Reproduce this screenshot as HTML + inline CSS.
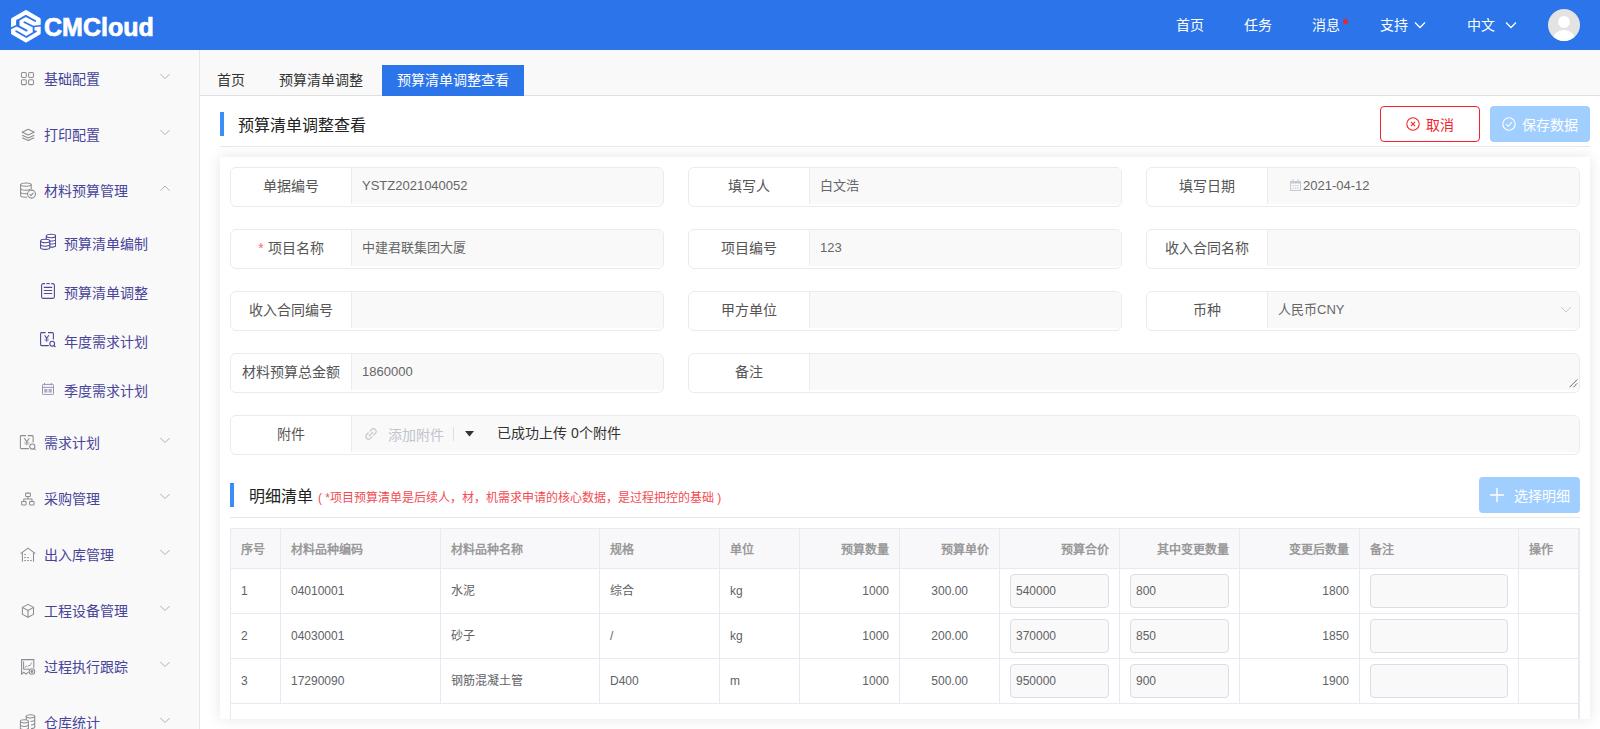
<!DOCTYPE html>
<html lang="zh-CN">
<head>
<meta charset="utf-8">
<title>CMCloud</title>
<style>
*{box-sizing:border-box;margin:0;padding:0}
html,body{width:1600px;height:729px;overflow:hidden;background:#f9f9f9;font-family:"Liberation Sans",sans-serif;color:#333}
.abs{position:absolute}
#hdr{position:absolute;left:0;top:0;width:1600px;height:50px;background:#2b74ea}
#side{position:absolute;left:0;top:50px;width:200px;height:679px;background:#f9f9f9;border-right:1px solid #e6e6e6}
.mi{position:absolute;left:0;width:199px;height:20px;font-size:14px;line-height:20px;color:#47449a}
.mi .t{position:absolute;left:44px;top:0;white-space:nowrap}
.mi .ic{position:absolute;left:20px;top:3px;width:14px;height:14px}
.mi .ch{position:absolute;left:160px;top:4px;width:10px;height:7px}
.sub .t{left:64px}
.sub .ic{left:40px}
#tabs{position:absolute;left:200px;top:50px;width:1400px;height:46px;background:#f9f9f9;border-bottom:1px solid #e0e0e0}
.tab{position:absolute;top:15px;height:30px;line-height:30px;font-size:14px;color:#333;white-space:nowrap}
#main{position:absolute;left:200px;top:96px;width:1400px;height:633px;background:#fff}
.logo-t{left:44px;top:11px;font-size:25px;line-height:32px;font-weight:bold;color:#fff;letter-spacing:0px;-webkit-text-stroke:0.7px #fff}
.nav{top:15px;font-size:14px;line-height:20px;color:#fff;white-space:nowrap}
.ttl{font-size:16px;line-height:24px;color:#222;white-space:nowrap}
.btn-c{width:100px;height:36px;border:1px solid #f5222d;border-radius:4px;background:#fff;color:#f5222d;font-size:14px;line-height:20px}
.btn-s{width:100px;height:36px;border-radius:4px;background:#a0cfff;color:#fff;font-size:14px;line-height:20px}
.btn-c span,.btn-s span{white-space:nowrap}
#card{position:absolute;left:20px;top:61px;width:1370px;height:562px;background:#fff;box-shadow:0 0 14px rgba(0,0,0,0.1)}
.fld{position:absolute;height:40px;border:1px solid #ebebeb;border-radius:6px;background:#fff;overflow:hidden}
.fld .lab{position:absolute;left:0;top:0;width:121px;height:36px;border-right:1px solid #ebebeb;text-align:center;font-size:14px;line-height:36px;color:#555;white-space:nowrap}
.fld .val{position:absolute;left:121px;top:0;right:0;height:36px;background:#f9f9f9;font-size:13px;line-height:36px;color:#666;padding-left:10px;white-space:nowrap}
#tbl{position:absolute;left:10px;top:371px;width:1350px;height:191px;overflow:hidden;border-top:0}
.hl{left:0;width:1350px;height:1px;background:#e8eaf3}
.vl{top:0;width:1px;height:175px;background:#e8eaf3}
.th{top:2px;height:40px;line-height:40px;font-size:12px;font-weight:bold;color:#999;white-space:nowrap;padding:0 10px 0 11px}
.td{height:45px;line-height:47px;font-size:12px;color:#606266;white-space:nowrap;padding:0 10px 0 11px}
.r{text-align:right}
.inp{height:34px;border:1px solid #dcdde6;border-radius:4px;background:#f9f9f9;font-size:12px;line-height:32px;color:#606266;padding-left:5px}
</style>
</head>
<body>
<div id="hdr">
<svg class="abs" style="left:8px;top:6px" width="40" height="40" viewBox="0 0 40 40"><g transform="translate(-8,-6)">
<path d="M26,11.6 L39.2,19.3 L39.2,33.3 L26,41 L12.6,33.3 L12.6,19.3 Z" fill="#fff" stroke="#fff" stroke-width="3" stroke-linejoin="round"/>
<g fill="none" stroke="#2b74ea" stroke-linecap="round" stroke-linejoin="round">
<path d="M35.2,21 L25.8,15.9 L17.8,20.5 L17.8,25.9 L26.6,30.6" stroke-width="1.8"/>
<path d="M17.8,21 L17.8,25.6" stroke-width="3.4"/>
<path d="M10,28.8 L15.8,26" stroke-width="1.6"/>
<path d="M24.4,22.2 L33.6,26.8 L33.6,31.3 L36,31.3 L26.3,37 L16.2,31.3" stroke-width="1.8"/>
<path d="M33.6,26.6 L42,25.6" stroke-width="1.5"/>
</g></g></svg>
<div class="abs logo-t">CMCloud</div>
<div class="abs nav" style="left:1176px">首页</div>
<div class="abs nav" style="left:1244px">任务</div>
<div class="abs nav" style="left:1312px">消息</div>
<div class="abs" style="left:1343px;top:19px;width:5px;height:5px;border-radius:50%;background:#f5222d"></div>
<div class="abs nav" style="left:1380px">支持</div>
<svg class="abs" style="left:1414px;top:21px" width="12" height="8" viewBox="0 0 12 8"><path d="M1,1.5 L6,6.5 L11,1.5" fill="none" stroke="#fff" stroke-width="1.3"/></svg>
<div class="abs nav" style="left:1467px">中文</div>
<svg class="abs" style="left:1505px;top:21px" width="12" height="8" viewBox="0 0 12 8"><path d="M1,1.5 L6,6.5 L11,1.5" fill="none" stroke="#fff" stroke-width="1.3"/></svg>
<svg class="abs" style="left:1548px;top:9px" width="32" height="32" viewBox="0 0 32 32"><defs><clipPath id="avc"><circle cx="16" cy="16" r="16"/></clipPath></defs><circle cx="16" cy="16" r="16" fill="#e3e3e3"/><g clip-path="url(#avc)" fill="#fff"><circle cx="16" cy="13" r="6"/><ellipse cx="16" cy="30" rx="11" ry="9"/></g></svg>
</div>
<div id="side">
<div class="mi" style="top:19px"><svg class="ic" style="left:0;top:0;width:40px;height:20px;overflow:visible" viewBox="0 0 40 20"><g fill="none" stroke="#8c8c92" stroke-width="1.05" stroke-linejoin="round"><rect x="21.4" y="3.5" width="4.9" height="4.9" rx="1.2"/><rect x="28.6" y="3.5" width="4.9" height="4.9" rx="1.2"/><rect x="21.4" y="10.7" width="4.9" height="4.9" rx="1.2"/><rect x="28.6" y="10.7" width="4.9" height="4.9" rx="1.2"/></g></svg><span class="t">基础配置</span><svg class="ch" viewBox="0 0 11 7"><path d="M0.5,0.8 L5.5,5.8 L10.5,0.8" fill="none" stroke="#a8a8b8" stroke-width="1"/></svg></div>
<div class="mi" style="top:75px"><svg class="ic" style="left:0;top:0;width:40px;height:20px;overflow:visible" viewBox="0 0 40 20"><g fill="none" stroke="#8c8c92" stroke-width="1.05" stroke-linejoin="round"><path d="M22.2,7.3 L28.2,4.3 L34.2,7.3 L28.2,9.9 Z"/><path d="M22.2,10.2 L28.2,13 L34.2,10.2"/><path d="M22.2,12.8 L28.2,15.5 L34.2,12.8"/></g></svg><span class="t">打印配置</span><svg class="ch" viewBox="0 0 11 7"><path d="M0.5,0.8 L5.5,5.8 L10.5,0.8" fill="none" stroke="#a8a8b8" stroke-width="1"/></svg></div>
<div class="mi" style="top:131px"><svg class="ic" style="left:0;top:0;width:40px;height:20px;overflow:visible" viewBox="0 0 40 20"><g fill="none" stroke="#8c8c92" stroke-width="1.05" stroke-linejoin="round"><ellipse cx="25.9" cy="3.6" rx="5.3" ry="1.7"/><path d="M20.6,3.6 V14.6 C20.6,15.6 23,16.3 25.9,16.3 C26.3,16.3 26.7,16.3 27,16.3"/><path d="M31.2,3.6 V8.5"/><path d="M20.6,7.5 C20.6,8.5 23,9.2 25.9,9.2 C27.5,9.2 29,9 30,8.6"/><path d="M20.6,11 C20.6,12 23,12.7 25.9,12.7 C26.5,12.7 27,12.7 27.3,12.6"/><circle cx="31.5" cy="13.1" r="4"/><path d="M29.6,13.2 L31,14.6 L33.5,11.8"/></g></svg><span class="t">材料预算管理</span><svg class="ch" viewBox="0 0 11 7"><path d="M0.5,5.8 L5.5,0.8 L10.5,5.8" fill="none" stroke="#a8a8b8" stroke-width="1"/></svg></div>
<div class="mi sub" style="top:184px"><svg class="ic" style="left:40px;top:-1px;width:16px;height:17px" viewBox="0 0 16 17"><g fill="#fff" stroke="#4d4a96" stroke-width="1.1"><path d="M6.3,3 V12.5 C6.3,13.4 8.4,14.1 11,14.1 C13.6,14.1 15.6,13.4 15.6,12.5 V3"/><ellipse cx="11" cy="3" rx="4.6" ry="1.7"/><path d="M6.3,6.4 C6.3,7.3 8.4,8 11,8 C13.6,8 15.6,7.3 15.6,6.4 M9,10.6 C9.6,10.9 10.3,11 11,11 C13.6,11 15.6,10.3 15.6,9.4" fill="none"/><path d="M0.6,8 V14.8 C0.6,15.7 2.7,16.4 5.2,16.4 C7.7,16.4 9.8,15.7 9.8,14.8 V8"/><ellipse cx="5.2" cy="8" rx="4.6" ry="1.7"/><path d="M0.6,11.6 C0.6,12.5 2.7,13.2 5.2,13.2 C7.7,13.2 9.8,12.5 9.8,11.6" fill="none"/></g></svg><span class="t">预算清单编制</span></div>
<div class="mi sub" style="top:233px"><svg class="ic" style="left:41px;top:0px;width:14px;height:16px" viewBox="0 0 14 16"><g fill="none" stroke="#4d4a96" stroke-width="1.1"><path d="M4,0.6 H2.2 C1.3,0.6 0.6,1.3 0.6,2.2 V13.8 C0.6,14.7 1.3,15.4 2.2,15.4 H11.8 C12.7,15.4 13.4,14.7 13.4,13.8 V2.2 C13.4,1.3 12.7,0.6 11.8,0.6 H10.2"/><path d="M5.3,0.6 H8.8"/><path d="M2.8,4.4 H11.2 M2.8,7.5 H11.2 M2.8,10.5 H11.2"/></g></svg><span class="t">预算清单调整</span></div>
<div class="mi sub" style="top:282px"><svg class="ic" style="left:40px;top:0px;width:16px;height:16px" viewBox="0 0 16 16"><g fill="none" stroke="#4d4a96" stroke-width="1.1"><path d="M5.6,0.6 H1.6 C1,0.6 0.6,1 0.6,1.6 V12.6 C0.6,13.2 1,13.6 1.6,13.6 H8.8"/><path d="M8,0.6 H12.4 C13,0.6 13.4,1 13.4,1.6 V7.5"/><path d="M4.6,3.2 L6.7,6.2 L8.8,3.2 M6.7,6.2 V9.8"/><circle cx="12.2" cy="11.7" r="2.4"/><path d="M13.9,13.4 L15.4,15"/></g><rect x="4.3" y="6.5" width="4.8" height="2.6" fill="#4d4a96" opacity="0.3"/></svg><span class="t">年度需求计划</span></div>
<div class="mi sub" style="top:331px"><svg class="ic" style="left:42px;top:1px;width:12px;height:13px" viewBox="0 0 12 13"><g fill="none" stroke="#9a92b4" stroke-width="1"><rect x="0.5" y="2.4" width="11" height="10.2" rx="0.8"/><path d="M0.5,5.4 H11.5"/><path d="M2.5,1 V3.4 M9.3,1 V3.4"/></g><g fill="#b4a6c4"><rect x="2.2" y="7" width="3.2" height="3.6"/><rect x="6.6" y="7" width="3.2" height="3.6"/></g></svg><span class="t">季度需求计划</span></div>
<div class="mi" style="top:383px"><svg class="ic" style="left:0;top:0;width:40px;height:20px;overflow:visible" viewBox="0 0 40 20"><g fill="none" stroke="#8c8c92" stroke-width="1.05" stroke-linejoin="round"><path d="M25.9,2.6 H21.2 C20.7,2.6 20.4,2.9 20.4,3.4 V14.8 C20.4,15.3 20.7,15.6 21.2,15.6 H28.8"/><path d="M27.8,2.6 H32.3 C32.8,2.6 33.1,2.9 33.1,3.4 V9.6"/><path d="M24.3,5.2 L26.8,8.6 L29.3,5.2 M26.8,8.6 V12.2"/><circle cx="32.3" cy="13.5" r="2.6"/><path d="M34.1,15.4 L35.6,17"/><rect x="24.2" y="8.6" width="5.2" height="3" fill="#8c8c92" stroke="none" opacity="0.35"/></g></svg><span class="t">需求计划</span><svg class="ch" viewBox="0 0 11 7"><path d="M0.5,0.8 L5.5,5.8 L10.5,0.8" fill="none" stroke="#a8a8b8" stroke-width="1"/></svg></div>
<div class="mi" style="top:439px"><svg class="ic" style="left:0;top:0;width:40px;height:20px;overflow:visible" viewBox="0 0 40 20"><g fill="none" stroke="#8c8c92" stroke-width="1.05" stroke-linejoin="round"><rect x="25.6" y="4.1" width="4.8" height="3.3" rx="0.6"/><rect x="21.6" y="12.5" width="4.5" height="3.4" rx="0.6"/><rect x="29.6" y="12.5" width="4.5" height="3.4" rx="0.6"/><path d="M28,7.4 V9.6 M23.8,12.5 V10 H32 V12.5"/></g></svg><span class="t">采购管理</span><svg class="ch" viewBox="0 0 11 7"><path d="M0.5,0.8 L5.5,5.8 L10.5,0.8" fill="none" stroke="#a8a8b8" stroke-width="1"/></svg></div>
<div class="mi" style="top:495px"><svg class="ic" style="left:0;top:0;width:40px;height:20px;overflow:visible" viewBox="0 0 40 20"><g fill="none" stroke="#8c8c92" stroke-width="1.05" stroke-linejoin="round"><path d="M20.6,8.6 L28,3.2 L35.4,8.6"/><path d="M22.4,7.3 V16.8 M33.5,7.3 V16.8"/></g><g fill="#8c8c92"><rect x="24.3" y="9" width="1.6" height="1.1"/><rect x="24.3" y="12" width="1.6" height="1.1"/><rect x="27.2" y="12" width="1.6" height="1.1"/><rect x="24.3" y="15" width="1.6" height="1.1"/><rect x="27.2" y="15" width="1.6" height="1.1"/><rect x="30.1" y="15" width="1.6" height="1.1"/></g></svg><span class="t">出入库管理</span><svg class="ch" viewBox="0 0 11 7"><path d="M0.5,0.8 L5.5,5.8 L10.5,0.8" fill="none" stroke="#a8a8b8" stroke-width="1"/></svg></div>
<div class="mi" style="top:551px"><svg class="ic" style="left:0;top:0;width:40px;height:20px;overflow:visible" viewBox="0 0 40 20"><g fill="none" stroke="#8c8c92" stroke-width="1.05" stroke-linejoin="round"><path d="M28,3.4 L33.5,6.4 V13.4 L28,16.3 L22.4,13.4 V6.4 Z"/><path d="M22.4,6.4 L28,9.5 L33.5,6.4 M28,9.5 V16.3"/></g></svg><span class="t">工程设备管理</span><svg class="ch" viewBox="0 0 11 7"><path d="M0.5,0.8 L5.5,5.8 L10.5,0.8" fill="none" stroke="#a8a8b8" stroke-width="1"/></svg></div>
<div class="mi" style="top:607px"><svg class="ic" style="left:0;top:0;width:40px;height:20px;overflow:visible" viewBox="0 0 40 20"><g fill="none" stroke="#8c8c92" stroke-width="1.05" stroke-linejoin="round"><path d="M21.6,17.4 V2.6 H33.8 V10.8" stroke-width="1.1"/><path d="M21.6,17.4 L23.8,15.2 L26,17.2 L28.4,15.2"/><path d="M23.6,4.4 V12.4 M23.6,12.2 H29.5" stroke-width="1"/><path d="M24.6,10.5 L26.3,9.2 L27.4,9.9 L29,8.3 L30,8.8 L31.6,5.6" stroke-width="0.8"/><circle cx="31.9" cy="14.5" r="2.8"/><circle cx="31.9" cy="14.5" r="0.9" fill="#8c8c92"/></g></svg><span class="t">过程执行跟踪</span><svg class="ch" viewBox="0 0 11 7"><path d="M0.5,0.8 L5.5,5.8 L10.5,0.8" fill="none" stroke="#a8a8b8" stroke-width="1"/></svg></div>
<div class="mi" style="top:663px"><svg class="ic" style="left:0;top:0;width:40px;height:20px;overflow:visible" viewBox="0 0 40 20"><g fill="none" stroke="#8c8c92" stroke-width="1.05" stroke-linejoin="round"><path d="M26.2,3.3 V8 M34.7,3.3 V14 C34.7,14.9 33,15.5 31,15.5"/><ellipse cx="30.45" cy="3.3" rx="4.25" ry="1.6"/><path d="M34.7,6.8 C34.7,7.7 32.8,8.4 30.45,8.4 M34.7,10.3 C34.7,11.2 33,11.8 31,11.9"/><path d="M20.4,8.3 V16 C20.4,16.9 22.3,17.6 24.4,17.6 C26.5,17.6 28.4,16.9 28.4,16 V8.3"/><ellipse cx="24.4" cy="8.3" rx="4" ry="1.6" fill="#f9f9f9"/><path d="M20.4,11.8 C20.4,12.7 22.3,13.4 24.4,13.4 C26.5,13.4 28.4,12.7 28.4,11.8 M20.4,15 C20.4,15.9 22.3,16.6 24.4,16.6 C26.5,16.6 28.4,15.9 28.4,15"/></g></svg><span class="t">仓库统计</span><svg class="ch" viewBox="0 0 11 7"><path d="M0.5,0.8 L5.5,5.8 L10.5,0.8" fill="none" stroke="#a8a8b8" stroke-width="1"/></svg></div>
</div>
<div id="tabs">
<div class="tab" style="left:17px">首页</div>
<div class="tab" style="left:79px">预算清单调整</div>
<div class="tab act" style="left:182px;width:142px;height:31px;text-align:center;background:#2b74ea;color:#fff">预算清单调整查看</div>
</div>
<div id="main">
<div class="abs" style="left:20px;top:16px;width:4px;height:24px;background:#3a8ef6"></div>
<div class="abs ttl" style="left:38px;top:18px">预算清单调整查看</div>
<div class="abs" style="left:20px;top:50px;width:1370px;height:1px;background:#e8e8e8"></div>
<div class="abs btn-c" style="left:1180px;top:10px"><svg class="abs" style="left:25px;top:10px" width="14" height="14" viewBox="0 0 14 14"><circle cx="7" cy="7" r="6.2" fill="none" stroke="#f5222d" stroke-width="1.1"/><path d="M4.9,4.9 L9.1,9.1 M9.1,4.9 L4.9,9.1" stroke="#f5222d" stroke-width="1.1"/></svg><span class="abs" style="left:45px;top:8px">取消</span></div>
<div class="abs btn-s" style="left:1290px;top:10px"><svg class="abs" style="left:12px;top:11px" width="14" height="14" viewBox="0 0 14 14"><circle cx="7" cy="7" r="6.2" fill="none" stroke="#fff" stroke-width="1.1"/><path d="M4,7.2 L6.2,9.3 L10,5.2" fill="none" stroke="#fff" stroke-width="1.1"/></svg><span class="abs" style="left:32px;top:9px">保存数据</span></div>
<div id="card">
<div class="fld" style="left:10px;top:10px;width:434px"><div class="lab">单据编号</div><div class="val" style="">YSTZ2021040052</div></div>
<div class="fld" style="left:468px;top:10px;width:434px"><div class="lab">填写人</div><div class="val" style="">白文浩</div></div>
<div class="fld" style="left:926px;top:10px;width:434px"><div class="lab">填写日期</div><div class="val" style="color:#666"><svg style="position:absolute;left:22px;top:11px" width="11" height="12" viewBox="0 0 11 12"><g fill="none" stroke="#c8cad2" stroke-width="1"><rect x="0.5" y="2.5" width="10" height="9"/><path d="M3,0 V2.5 M8,0 V2.5"/></g><rect x="0.5" y="2.5" width="10" height="2" fill="#c8cad2"/><g fill="#d4d6dc"><rect x="2.3" y="6" width="1.6" height="1.2"/><rect x="4.7" y="6" width="1.6" height="1.2"/><rect x="7.1" y="6" width="1.6" height="1.2"/><rect x="2.3" y="8.5" width="1.6" height="1.4"/><rect x="4.7" y="8.5" width="1.6" height="1.4"/><rect x="7.1" y="8.5" width="1.6" height="1.4"/></g></svg><span style="position:absolute;left:35px">2021-04-12</span></div></div>
<div class="fld" style="left:10px;top:72px;width:434px"><div class="lab"><span style="color:#f56c6c">* </span>项目名称</div><div class="val" style="">中建君联集团大厦</div></div>
<div class="fld" style="left:468px;top:72px;width:434px"><div class="lab">项目编号</div><div class="val" style="">123</div></div>
<div class="fld" style="left:926px;top:72px;width:434px"><div class="lab">收入合同名称</div><div class="val" style=""></div></div>
<div class="fld" style="left:10px;top:134px;width:434px"><div class="lab">收入合同编号</div><div class="val" style=""></div></div>
<div class="fld" style="left:468px;top:134px;width:434px"><div class="lab">甲方单位</div><div class="val" style=""></div></div>
<div class="fld" style="left:926px;top:134px;width:434px"><div class="lab">币种</div><div class="val" style="">人民币CNY<svg style="position:absolute;right:7px;top:13px" width="12" height="9" viewBox="0 0 12 9"><path d="M1,2 L6,7 L11,2" fill="none" stroke="#c0c4cc" stroke-width="0.9"/></svg></div></div>
<div class="fld" style="left:10px;top:196px;width:434px"><div class="lab">材料预算总金额</div><div class="val" style="">1860000</div></div>
<div class="fld" style="left:468px;top:196px;width:892px"><div class="lab">备注</div><div class="val" style=""><svg style="position:absolute;right:1px;bottom:2px" width="9" height="9" viewBox="0 0 9 9"><path d="M8,0.8 L0.8,8 M8,4.6 L4.6,8" stroke="#666" stroke-width="1" stroke-linecap="round" stroke-dasharray="1.2 0.6"/></svg></div></div>
<div class="abs" style="left:10px;top:326px;width:4px;height:24px;background:#3a8ef6"></div>
<div class="abs" style="left:29px;top:328px;font-size:16px;line-height:24px;color:#222;white-space:nowrap">明细清单<span style="font-size:12px;color:#f24c52;margin-left:5px;position:relative;top:0px">( *项目预算清单是后续人，材，机需求申请的核心数据，是过程把控的基础 )</span></div>
<div class="abs btn-s" style="left:1259px;top:320px;width:101px"><svg class="abs" style="left:11px;top:11px" width="14" height="14" viewBox="0 0 14 14"><path d="M7,0 V14 M0,7 H14" stroke="#fff" stroke-width="1.4"/></svg><span class="abs" style="left:35px;top:9px">选择明细</span></div>
<div class="abs" style="left:10px;top:360px;width:1350px;height:1px;background:#e8e8e8"></div>
<div id="tbl">
<div class="abs" style="left:0;top:0;width:1350px;height:40px;background:#f8f8fa"></div>
<div class="abs hl" style="top:0px"></div>
<div class="abs hl" style="top:40px"></div>
<div class="abs hl" style="top:85px"></div>
<div class="abs hl" style="top:130px"></div>
<div class="abs hl" style="top:175px"></div>
<div class="abs vl" style="left:0px;height:200px"></div>
<div class="abs vl" style="left:50px"></div>
<div class="abs vl" style="left:210px"></div>
<div class="abs vl" style="left:369px"></div>
<div class="abs vl" style="left:489px"></div>
<div class="abs vl" style="left:569px"></div>
<div class="abs vl" style="left:669px"></div>
<div class="abs vl" style="left:769px"></div>
<div class="abs vl" style="left:889px"></div>
<div class="abs vl" style="left:1009px"></div>
<div class="abs vl" style="left:1129px"></div>
<div class="abs vl" style="left:1288px"></div>
<div class="abs" style="left:1348px;top:0;width:2px;height:200px;background:#e8eaf3"></div>
<div class="abs th l" style="left:0px;width:50px">序号</div>
<div class="abs th l" style="left:50px;width:160px">材料品种编码</div>
<div class="abs th l" style="left:210px;width:159px">材料品种名称</div>
<div class="abs th l" style="left:369px;width:120px">规格</div>
<div class="abs th l" style="left:489px;width:80px">单位</div>
<div class="abs th r" style="left:569px;width:100px">预算数量</div>
<div class="abs th r" style="left:669px;width:100px">预算单价</div>
<div class="abs th r" style="left:769px;width:120px">预算合价</div>
<div class="abs th r" style="left:889px;width:120px">其中变更数量</div>
<div class="abs th r" style="left:1009px;width:120px">变更后数量</div>
<div class="abs th l" style="left:1129px;width:159px">备注</div>
<div class="abs th l" style="left:1288px;width:61px">操作</div>
<div class="abs td l" style="left:0px;top:40px;width:50px">1</div>
<div class="abs td l" style="left:50px;top:40px;width:160px">04010001</div>
<div class="abs td l" style="left:210px;top:40px;width:159px">水泥</div>
<div class="abs td l" style="left:369px;top:40px;width:120px">综合</div>
<div class="abs td l" style="left:489px;top:40px;width:80px">kg</div>
<div class="abs td r" style="left:569px;top:40px;width:100px">1000</div>
<div class="abs td r" style="left:669px;top:40px;width:100px;padding-right:31px">300.00</div>
<div class="abs inp" style="left:780px;top:46px;width:99px">540000</div>
<div class="abs inp" style="left:900px;top:46px;width:99px">800</div>
<div class="abs td r" style="left:1009px;top:40px;width:120px">1800</div>
<div class="abs inp" style="left:1140px;top:46px;width:138px"></div>
<div class="abs td l" style="left:0px;top:85px;width:50px">2</div>
<div class="abs td l" style="left:50px;top:85px;width:160px">04030001</div>
<div class="abs td l" style="left:210px;top:85px;width:159px">砂子</div>
<div class="abs td l" style="left:369px;top:85px;width:120px">/</div>
<div class="abs td l" style="left:489px;top:85px;width:80px">kg</div>
<div class="abs td r" style="left:569px;top:85px;width:100px">1000</div>
<div class="abs td r" style="left:669px;top:85px;width:100px;padding-right:31px">200.00</div>
<div class="abs inp" style="left:780px;top:91px;width:99px">370000</div>
<div class="abs inp" style="left:900px;top:91px;width:99px">850</div>
<div class="abs td r" style="left:1009px;top:85px;width:120px">1850</div>
<div class="abs inp" style="left:1140px;top:91px;width:138px"></div>
<div class="abs td l" style="left:0px;top:130px;width:50px">3</div>
<div class="abs td l" style="left:50px;top:130px;width:160px">17290090</div>
<div class="abs td l" style="left:210px;top:130px;width:159px">钢筋混凝土管</div>
<div class="abs td l" style="left:369px;top:130px;width:120px">D400</div>
<div class="abs td l" style="left:489px;top:130px;width:80px">m</div>
<div class="abs td r" style="left:569px;top:130px;width:100px">1000</div>
<div class="abs td r" style="left:669px;top:130px;width:100px;padding-right:31px">500.00</div>
<div class="abs inp" style="left:780px;top:136px;width:99px">950000</div>
<div class="abs inp" style="left:900px;top:136px;width:99px">900</div>
<div class="abs td r" style="left:1009px;top:130px;width:120px">1900</div>
<div class="abs inp" style="left:1140px;top:136px;width:138px"></div>
</div>
<div class="fld" style="left:10px;top:258px;width:1350px"><div class="lab">附件</div><div class="val" style=""><svg style="position:absolute;left:13px;top:12px" width="12" height="12" viewBox="0 0 12 12"><g fill="none" stroke="#c0c4cc" stroke-width="1.2" stroke-linecap="round"><path d="M5,3.2 L6.6,1.6 C7.6,0.6 9.4,0.6 10.4,1.6 C11.4,2.6 11.4,4.4 10.4,5.4 L8.8,7"/><path d="M7,8.8 L5.4,10.4 C4.4,11.4 2.6,11.4 1.6,10.4 C0.6,9.4 0.6,7.6 1.6,6.6 L3.2,5"/><path d="M4.2,7.8 L7.8,4.2"/></g></svg><span style="position:absolute;left:36px;top:1px;color:#c0c4cc;font-size:14px">添加附件</span><div style="position:absolute;left:101px;top:11px;width:1px;height:14px;background:#dcdfe6"></div><svg style="position:absolute;left:113px;top:15px" width="9" height="6" viewBox="0 0 9 6"><path d="M0,0 H9 L4.5,5.5 Z" fill="#333"/></svg><span style="position:absolute;left:145px;top:-1px;color:#333;font-size:14px">已成功上传 0个附件</span></div></div>
</div>
</div>
</body>
</html>
